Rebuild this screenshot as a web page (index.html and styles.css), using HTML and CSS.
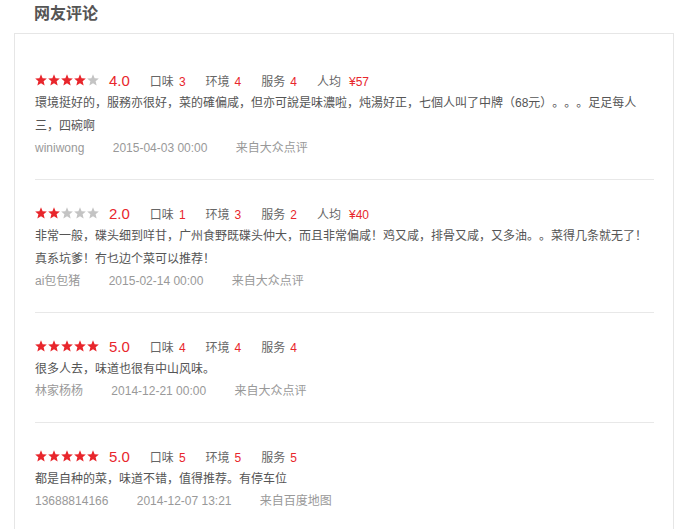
FILE: index.html
```html
<!DOCTYPE html>
<html lang="zh-CN">

<head>
    <meta charset="UTF-8">
    <meta name="viewport" content="width=device-width, initial-scale=1.0">
    <title>网友评论</title>

    <link rel="stylesheet" href="styles.css">
</head>

<body>
    <svg width="0" height="0" class="defs">
        <symbol id="star" viewBox="0 0 24 24">
            <polygon points="12,0.5 15.2,8.4 23.7,9 17.2,14.5 19.3,23 12,18.4 4.7,23 6.8,14.5 0.3,9 8.8,8.4" />
        </symbol>
    </svg>

    <div class="wrap">
        <h2 class="title">网友评论</h2>

        <div class="box">
            <!-- 第一條 -->
            <div class="review">
                <div class="head">
                    <span class="stars">
                        <svg class="star on"><use href="#star" /></svg>
                        <svg class="star on"><use href="#star" /></svg>
                        <svg class="star on"><use href="#star" /></svg>
                        <svg class="star on"><use href="#star" /></svg>
                        <svg class="star"><use href="#star" /></svg>
                    </span>
                    <span class="score">4.0</span>
                    <span class="item">口味<em>3</em></span>
                    <span class="item">环境<em>4</em></span>
                    <span class="item">服务<em>4</em></span>
                    <span class="item">人均<em class="price">¥57</em></span>
                </div>
                <p class="text">環境挺好的，服務亦很好，菜的確偏咸，但亦可說是味濃啦，炖湯好正，七個人叫了中牌（68元）。。。足足每人三，四碗啊</p>
                <div class="meta">
                    <span>winiwong</span>
                    <span>2015-04-03 00:00</span>
                    <span>来自大众点评</span>
                </div>
            </div>

            <!-- 第二條 -->
            <div class="review">
                <div class="head">
                    <span class="stars">
                        <svg class="star on"><use href="#star" /></svg>
                        <svg class="star on"><use href="#star" /></svg>
                        <svg class="star"><use href="#star" /></svg>
                        <svg class="star"><use href="#star" /></svg>
                        <svg class="star"><use href="#star" /></svg>
                    </span>
                    <span class="score">2.0</span>
                    <span class="item">口味<em>1</em></span>
                    <span class="item">环境<em>3</em></span>
                    <span class="item">服务<em>2</em></span>
                    <span class="item">人均<em class="price">¥40</em></span>
                </div>
                <p class="text">非常一般，碟头细到咩甘，广州食野既碟头仲大，而且非常偏咸！鸡又咸，排骨又咸，又多油。。菜得几条就无了！真系坑爹！冇乜边个菜可以推荐！</p>
                <div class="meta">
                    <span>ai包包猪</span>
                    <span>2015-02-14 00:00</span>
                    <span>来自大众点评</span>
                </div>
            </div>

            <!-- 第三條 -->
            <div class="review">
                <div class="head">
                    <span class="stars">
                        <svg class="star on"><use href="#star" /></svg>
                        <svg class="star on"><use href="#star" /></svg>
                        <svg class="star on"><use href="#star" /></svg>
                        <svg class="star on"><use href="#star" /></svg>
                        <svg class="star on"><use href="#star" /></svg>
                    </span>
                    <span class="score">5.0</span>
                    <span class="item">口味<em>4</em></span>
                    <span class="item">环境<em>4</em></span>
                    <span class="item">服务<em>4</em></span>
                </div>
                <p class="text">很多人去，味道也很有中山风味。</p>
                <div class="meta">
                    <span>林家杨杨</span>
                    <span>2014-12-21 00:00</span>
                    <span>来自大众点评</span>
                </div>
            </div>

            <!-- 第四條 -->
            <div class="review">
                <div class="head">
                    <span class="stars">
                        <svg class="star on"><use href="#star" /></svg>
                        <svg class="star on"><use href="#star" /></svg>
                        <svg class="star on"><use href="#star" /></svg>
                        <svg class="star on"><use href="#star" /></svg>
                        <svg class="star on"><use href="#star" /></svg>
                    </span>
                    <span class="score">5.0</span>
                    <span class="item">口味<em>5</em></span>
                    <span class="item">环境<em>5</em></span>
                    <span class="item">服务<em>5</em></span>
                </div>
                <p class="text">都是自种的菜，味道不错，值得推荐。有停车位</p>
                <div class="meta">
                    <span>13688814166</span>
                    <span>2014-12-07 13:21</span>
                    <span>来自百度地图</span>
                </div>
            </div>
        </div>
    </div>
</body>

</html>
```

FILE: styles.css
```css
body {
    margin: 0;
    background-color: #fff;
    font-family: "Liberation Sans", "Noto Sans CJK SC", sans-serif;
    color: #555;
    text-spacing-trim: space-all;
}

.defs {
    position: absolute;
}

.wrap {
    margin: 0 14px;
}

/* 標題 */
.title {
    margin: 0 0 5px;
    padding-left: 20px;
    font-size: 16px;
    line-height: 28px;
    font-weight: bold;
    color: #555;
}

.box {
    border: 1px solid #e6e6e6;
    padding: 13px 19px 0 20px;
}

/* 每條評論 */
.review {
    padding: 21px 0 21px;
    border-bottom: 1px solid #e8e8e8;
}

.head {
    display: flex;
    align-items: center;
    height: 24px;
    font-size: 12px;
    color: #666;
}

.stars {
    display: flex;
    gap: 1px;
}

.star {
    width: 12px;
    height: 12px;
    fill: #c4c4c4;
}

.star.on {
    fill: #e8262c;
}

.score {
    margin: 0 20px 0 10px;
    font-size: 15px;
    color: #e8262c;
}

.item {
    margin-right: 20px;
}

.item em {
    font-style: normal;
    color: #e8262c;
    margin-left: 5px;
}

.item .price {
    margin-left: 8px;
}

.text {
    margin: 0;
    font-size: 12px;
    line-height: 23px;
    color: #555;
}

.meta {
    font-size: 12px;
    line-height: 20px;
    color: #999;
}

.meta span {
    margin-right: 25px;
}
```
